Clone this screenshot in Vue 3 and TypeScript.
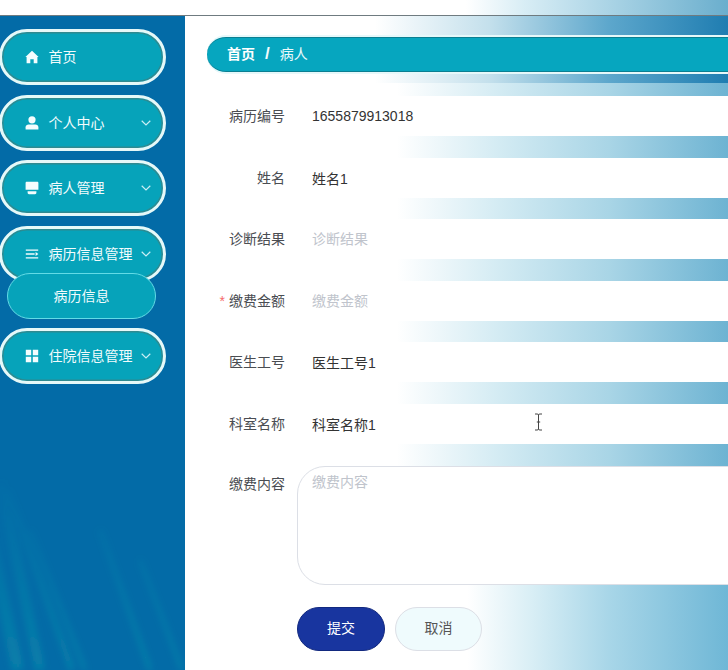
<script setup lang="ts">
interface MenuItem { label: string; icon: string; arrow: boolean; children?: string[] }
interface Field { label: string; value?: string; placeholder: string; required?: boolean }

const menu: MenuItem[] = [
  { label: '首页', icon: 'home', arrow: false },
  { label: '个人中心', icon: 'user', arrow: true },
  { label: '病人管理', icon: 'drawer', arrow: true },
  { label: '病历信息管理', icon: 'list', arrow: true, children: ['病历信息'] },
  { label: '住院信息管理', icon: 'grid', arrow: true },
]

const fields: Field[] = [
  { label: '病历编号', value: '1655879913018', placeholder: '病历编号' },
  { label: '姓名', value: '姓名1', placeholder: '姓名' },
  { label: '诊断结果', placeholder: '诊断结果' },
  { label: '缴费金额', placeholder: '缴费金额', required: true },
  { label: '医生工号', value: '医生工号1', placeholder: '医生工号' },
  { label: '科室名称', value: '科室名称1', placeholder: '科室名称' },
]
</script>

<template>
  <div class="app">
    <header class="topbar"></header>
    <div class="body">
      <aside class="sidebar">
        <svg class="streaks" viewBox="0 0 185 200" preserveAspectRatio="none" aria-hidden="true">
          <defs>
            <filter id="soft"><feGaussianBlur stdDeviation="3" /></filter>
            <linearGradient id="fade" gradientUnits="userSpaceOnUse" x1="0" y1="0" x2="0" y2="200">
              <stop offset="0" stop-color="#12a0ae" stop-opacity="0" />
              <stop offset="1" stop-color="#12a0ae" stop-opacity="0.38" />
            </linearGradient>
          </defs>
          <g filter="url(#soft)" stroke="url(#fade)" fill="none">
            <path d="M0 10 L40 200" stroke-width="10" />
            <path d="M8 20 L72 200" stroke-width="6" />
            <path d="M30 60 L85 200" stroke-width="4" />
            <path d="M-10 70 L18 200" stroke-width="12" />
            <path d="M100 60 L150 200" stroke-width="5" />
            <path d="M140 90 L182 200" stroke-width="4" />
          </g>
        </svg>
        <nav class="menu">
          <template v-for="item in menu" :key="item.label">
            <div class="pill" :class="{ open: item.children }">
              <span class="icon">
                <svg v-if="item.icon === 'home'" viewBox="0 0 14 14">
                  <path d="M7 .8 13.6 7 12.4 7V13.2H8.7V9.2H5.3V13.2H1.6V7H.4Z" />
                </svg>
                <svg v-else-if="item.icon === 'user'" viewBox="0 0 14 14">
                  <circle cx="7" cy="3.8" r="3.6" />
                  <path d="M.6 13.6V11.2C.6 9.6 2 8.6 3.6 8.6H10.4C12 8.6 13.4 9.6 13.4 11.2V13.6Z" />
                </svg>
                <svg v-else-if="item.icon === 'drawer'" viewBox="0 0 14 14">
                  <path d="M1.8 .8H12.2C12.9.8 13.4 1.3 13.4 2V8.8H.6V2C.6 1.3 1.1.8 1.8.8Z" />
                  <path d="M2.6 10.2H11.4V11.6C11.4 12.6 10.8 13.2 10 13.2H4C3.2 13.2 2.6 12.6 2.6 11.6Z" />
                </svg>
                <svg v-else-if="item.icon === 'list'" viewBox="0 0 14 14">
                  <path d="M.8 2.4H13.2V3.8H.8ZM.8 6.3H9.6V7.7H.8ZM.8 10.2H13.2V11.6H.8ZM10.6 5 13.4 7 10.6 9Z" />
                </svg>
                <svg v-else viewBox="0 0 14 14">
                  <path d="M.8 .8H6.2V6.2H.8ZM7.8 .8H13.2V6.2H7.8ZM.8 7.8H6.2V13.2H.8ZM7.8 7.8H13.2V13.2H7.8Z" />
                </svg>
              </span>
              <span class="pill-label">{{ item.label }}</span>
              <svg v-if="item.arrow" class="chevron" viewBox="0 0 10 6">
                <path d="M.7 .8 5 5 9.3 .8" />
              </svg>
            </div>
            <div v-for="child in item.children" :key="child" class="sub">{{ child }}</div>
          </template>
        </nav>
      </aside>

      <main class="main">
        <div class="crumb-band">
          <div class="crumb">
            <span class="crumb-link">首页</span>
            <span class="crumb-sep">/</span>
            <span>病人</span>
          </div>
        </div>

        <form class="form" @submit.prevent>
          <div v-for="f in fields" :key="f.label" class="row">
            <label class="label"><span v-if="f.required" class="star">*</span>{{ f.label }}</label>
            <input class="input" :value="f.value ?? ''" :placeholder="f.placeholder" />
          </div>
          <div class="row row-area">
            <label class="label">缴费内容</label>
            <textarea class="textarea" placeholder="缴费内容"></textarea>
          </div>
          <div class="actions">
            <button type="button" class="btn primary">提交</button>
            <button type="button" class="btn plain">取消</button>
          </div>
        </form>

        <svg class="cursor" viewBox="0 0 9 18" aria-hidden="true">
          <path d="M1 1H3.2C4 1 4.5 1.4 4.5 2V16C4.5 16.6 4 17 3.2 17H1M8 1H5.8C5 1 4.5 1.4 4.5 2M4.5 16C4.5 16.6 5 17 5.8 17H8M2.8 9H6.2" />
        </svg>
      </main>
    </div>
  </div>
</template>

<style>
html, body { margin: 0; background: #fff; }
</style>

<style scoped>
.app {
  width: 728px;
  height: 670px;
  display: flex;
  flex-direction: column;
  overflow: hidden;
  font-family: "Liberation Sans", "Noto Sans CJK SC", sans-serif;
  font-size: 14px;
}

.topbar {
  flex: none;
  height: 15px;
  border-bottom: 1px solid #6f7b80;
  background: linear-gradient(90deg, #fff 0, #fff 64%, #d8edf5 72%, #a9d3e5 84%, #6aaecd 100%);
}

.body {
  flex: 1;
  min-height: 0;
  display: flex;
}

.sidebar {
  flex: none;
  width: 185px;
  position: relative;
  background: #036ba7;
  padding-top: 13px;
  box-sizing: border-box;
}

.streaks {
  position: absolute;
  left: 0;
  bottom: 0;
  width: 185px;
  height: 200px;
}

.menu {
  position: relative;
  display: flex;
  flex-direction: column;
}

.pill {
  position: relative;
  width: 167px;
  height: 56px;
  box-sizing: border-box;
  flex: none;
  margin: 0 0 9.5px -1px;
  display: flex;
  align-items: center;
  padding-left: 23px;
  border: 3px solid #e6f8f8;
  border-radius: 28px;
  background: #06a3ba;
  box-shadow: inset 0 0 0 1.5px #2f8a90;
  color: #f2fcfd;
}

.pill.open {
  margin-bottom: 0;
}

.pill-label {
  padding-bottom: 2px;
  margin-left: 0.5px;
}

.icon {
  flex: none;
  width: 14px;
  height: 14px;
  margin-right: 9px;
  display: flex;
}

.icon svg {
  width: 14px;
  height: 14px;
  fill: #f4fdfe;
}

.chevron {
  position: absolute;
  right: 12px;
  top: 50%;
  width: 10px;
  height: 6px;
  margin-top: -3px;
  fill: none;
  stroke: #c9eef4;
  stroke-width: 1.2;
}

.sub {
  position: relative;
  flex: none;
  width: 149px;
  height: 46px;
  margin: -8.5px 0 9px 7px;
  padding-bottom: 2px;
  box-sizing: border-box;
  display: flex;
  align-items: center;
  justify-content: center;
  border: 1px solid #63dbe6;
  border-radius: 23px;
  background: #06a3ba;
  color: #f2fcfd;
}

.main {
  flex: 1;
  min-width: 0;
  position: relative;
  display: flex;
  flex-direction: column;
  overflow: hidden;
}

.crumb-band {
  flex: none;
  padding: 19px 0 9px 22px;
  background: linear-gradient(90deg, #fff 0, #fff 35%, #c4e0ec 56%, #5da7cc 78%, #1f7db1 100%);
}

.crumb {
  height: 39px;
  width: 600px;
  box-sizing: border-box;
  display: flex;
  align-items: center;
  padding: 0 0 3px 20px;
  border: 2px solid #e6f8fa;
  border-left: none;
  border-radius: 19px 0 0 19px;
  background: #06a6bf;
  box-shadow: inset 0 1px 0 #0b7f92, inset 0 -1px 0 #0b7f92;
  color: #eafafc;
}

.crumb-link {
  font-weight: 700;
  color: #fff;
}

.crumb-sep {
  margin: 0 10px;
  padding-top: 2px;
  font-size: 17px;
  font-weight: 700;
  color: #f2fcfd;
}

.form {
  flex: 1;
  min-height: 0;
  padding-top: 13px;
  display: flex;
  flex-direction: column;
  background: linear-gradient(90deg, #fff 0, #fff 39%, #d3ebf3 58%, #a9d5e6 78%, #6db3d2 100%);
}

.row {
  flex: none;
  height: 40px;
  margin-bottom: 21.6px;
  display: flex;
  background: #fff;
}

.row-area {
  height: 119px;
  margin-bottom: 0;
}

.label {
  flex: none;
  width: 112px;
  box-sizing: border-box;
  padding-right: 12px;
  line-height: 40px;
  text-align: right;
  color: #4a4d52;
}

.row-area .label {
  line-height: 36px;
}

.star {
  margin-right: 4px;
  color: #f56c6c;
}

.input {
  flex: 1;
  min-width: 0;
  height: 40px;
  box-sizing: border-box;
  border: none;
  outline: none;
  padding: 0 15px;
  background: transparent;
  font: inherit;
  color: #333;
}

.textarea {
  flex: 1;
  min-width: 0;
  margin-right: -30px;
  box-sizing: border-box;
  border: 1px solid #dcdfe6;
  border-radius: 28px;
  padding: 5px 14px;
  outline: none;
  resize: none;
  background: #fff;
  font: inherit;
  line-height: 20px;
  color: #333;
}

.input::placeholder,
.textarea::placeholder {
  color: #c0c4cc;
  opacity: 1;
}

.actions {
  flex: 1;
  display: flex;
  align-items: flex-start;
  gap: 10px;
  padding: 22px 0 0 112px;
  background: linear-gradient(90deg, #fff 0, #fff 52%, #d8eef5 64%, #a8d6e8 78%, #6fb7d6 100%);
}

.btn {
  width: 88px;
  height: 44px;
  box-sizing: border-box;
  border-radius: 22px;
  padding: 0 0 3px;
  font: inherit;
}

.primary {
  border: 1px solid #12297f;
  background: #18359f;
  color: #fff;
}

.plain {
  width: 87px;
  border: 1px solid #dcdfe6;
  background: #effbfd;
  color: #555;
}

.cursor {
  position: absolute;
  left: 349px;
  top: 397px;
  width: 9px;
  height: 18px;
  fill: none;
  stroke: #444;
  stroke-width: 1;
}
</style>
